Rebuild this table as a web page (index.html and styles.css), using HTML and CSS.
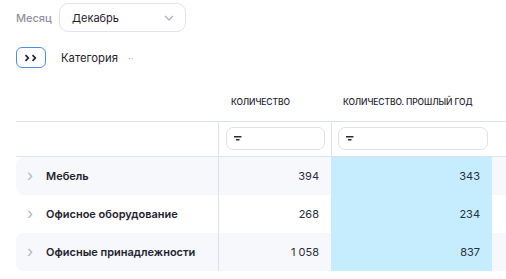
FILE: index.html
```html
<!DOCTYPE html>
<html lang="ru">
<head>
<meta charset="utf-8">
<link rel="stylesheet" href="styles.css">
</head>
<body>
<div class="toolbar">
  <span class="label">Месяц</span>
  <div class="select">
    <span>Декабрь</span>
    <svg class="chev" width="10" height="6" viewBox="0 0 10 6"><path d="M1 1l4 4 4-4" fill="none" stroke="#a9aebd" stroke-width="1.2"/></svg>
  </div>
</div>
<div class="groupbar">
  <button class="expand">
    <svg width="14" height="8" viewBox="0 0 14 8"><path d="M1.5 1.2l2.8 2.8-2.8 2.8M8.5 1.2l2.8 2.8-2.8 2.8" fill="none" stroke="#1f2330" stroke-width="1.7"/></svg>
  </button>
  <span class="cat">Категория</span>
  <span class="dots">··</span>
</div>
<div class="table">
  <div class="hcell c1"></div>
  <div class="hcell c2">КОЛИЧЕСТВО</div>
  <div class="hcell c3">КОЛИЧЕСТВО. ПРОШЛЫЙ ГОД</div>
  <div class="hcell c4"></div>

  <div class="fcell c1"></div>
  <div class="fcell c2"><div class="finput"><svg width="8" height="5" viewBox="0 0 8 5"><path d="M0 0.75h7.5M2 3.75h3.5" stroke="#2a2e3a" stroke-width="1.5"/></svg></div></div>
  <div class="fcell c3"><div class="finput"><svg width="8" height="5" viewBox="0 0 8 5"><path d="M0 0.75h7.5M2 3.75h3.5" stroke="#2a2e3a" stroke-width="1.5"/></svg></div></div>
  <div class="fcell c4"></div>

  <div class="row alt">
    <div class="cell name"><span class="arrow">›</span><b>Мебель</b></div>
    <div class="cell num">394</div>
    <div class="cell num hl">343</div>
    <div class="cell"></div>
  </div>
  <div class="row">
    <div class="cell name"><span class="arrow">›</span><b>Офисное оборудование</b></div>
    <div class="cell num">268</div>
    <div class="cell num hl">234</div>
    <div class="cell"></div>
  </div>
  <div class="row alt">
    <div class="cell name"><span class="arrow">›</span><b>Офисные принадлежности</b></div>
    <div class="cell num">1 058</div>
    <div class="cell num hl">837</div>
    <div class="cell"></div>
  </div>
</div>
</body>
</html>
```
FILE: styles.css
```css
* { box-sizing: border-box; }
html, body { margin: 0; padding: 0; background: #fff; }
body {
  font-family: Inter, "Noto Sans", sans-serif;
  font-size: 11px;
  color: #1f2330;
  width: 506px;
  height: 279px;
  overflow: hidden;
}
.toolbar {
  display: flex;
  align-items: center;
  padding: 3px 0 0 16px;
  height: 32px;
}
.label { color: #8c91a0; font-size: 11px; font-weight: 500; width: 43px; }
.select {
  width: 127px;
  height: 29px;
  border: 1px solid #dfe3ea;
  border-radius: 9px;
  display: flex;
  align-items: center;
  justify-content: space-between;
  padding: 0 11px 0 12px;
  font-size: 11px;
}
.chev { margin-top: 1px; }
.groupbar {
  display: flex;
  align-items: center;
  padding: 15px 0 0 16px;
  height: 36px;
}
.expand {
  width: 30px;
  height: 21px;
  border: 1.5px solid #4a8df0;
  border-radius: 6px;
  background: #fff;
  display: flex;
  align-items: center;
  justify-content: center;
  padding: 0;
}
.cat { margin-left: 15px; font-size: 11.3px; }
.dots { margin-left: 10px; color: #a9aebd; font-size: 10px; letter-spacing: 0; }
.table {
  display: grid;
  grid-template-columns: 202px 113px 161px 14px;
  margin: 26px 0 0 16px;
}
.hcell {
  height: 28px;
  font-size: 8.5px;
  font-weight: 500;
  border-bottom: 1px solid #dde1ea;
  padding-top: 3px;
  letter-spacing: -0.1px;
}
.hcell.c2 { padding-left: 13px; }
.hcell.c3 { padding-left: 12px; }
.fcell {
  height: 35px;
  border-bottom: 1px solid #dde1ea;
}
.fcell.c2, .fcell.c3 { border-left: 1px solid #dde1ea; }
.fcell.c2 { padding: 5px 6px 0 7px; }
.fcell.c3 { padding: 5px 4px 0 6px; }
.finput {
  height: 23px;
  border: 1px solid #dde1ea;
  border-radius: 7px;
  display: flex;
  align-items: center;
  padding-left: 7px;
}
.row { display: contents; }
.cell {
  height: 38px;
  display: flex;
  align-items: center;
}
.row.alt .cell { background: #f7f8fc; }
.row.alt .cell:first-child { border-radius: 8px 0 0 8px; }
.cell.name { padding-left: 11px; }
.cell.name b { font-weight: 600; }
.arrow {
  color: #b3b7c3;
  font-size: 16px;
  width: 19px;
  line-height: 1;
  margin-top: -2px;
}
.cell.num {
  justify-content: flex-end;
  padding-right: 12px;
  border-left: 1px solid #dde1ea;
  color: #2a2e3a;
}
.row .cell.num.hl { background: #c5edfd; border-left: none; padding-right: 12px; }
```
